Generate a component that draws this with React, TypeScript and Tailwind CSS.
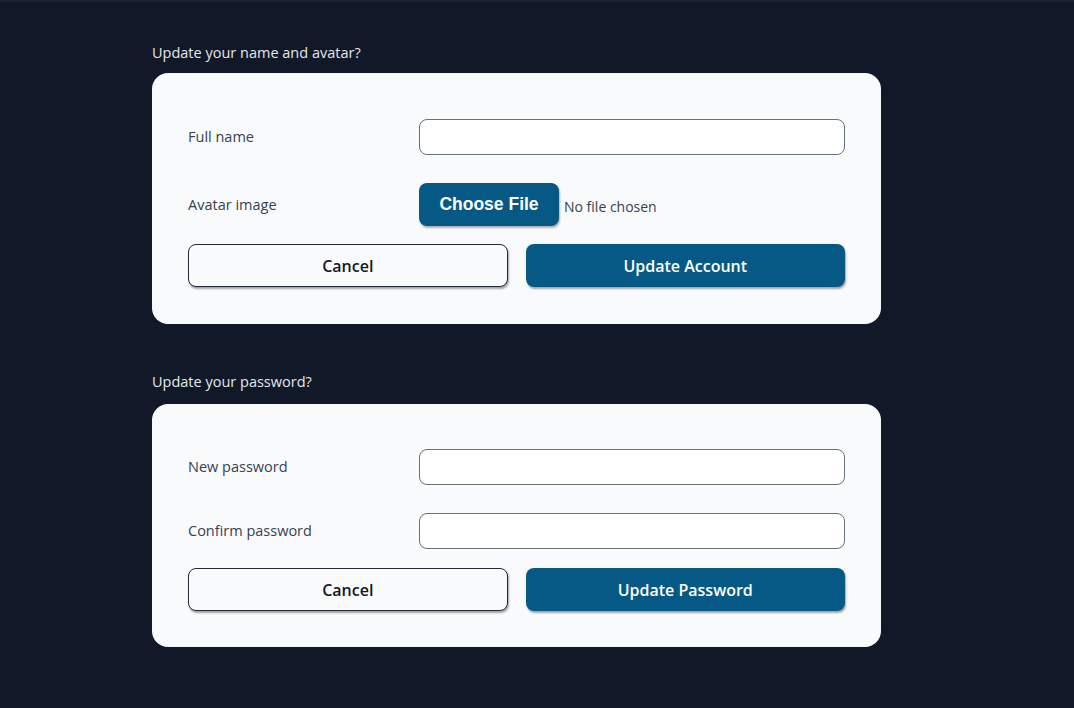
import React from "react";

const font = { fontFamily: '"Open Sans", "Noto Sans", sans-serif' };

function Row({ label, children }: { label: string; children: React.ReactNode }) {
  return (
    <div className="grid grid-cols-[231px_1fr] items-center">
      <label className="text-[14.5px] text-[#374151]">{label}</label>
      {children}
    </div>
  );
}

function Input({ type = "text" }: { type?: string }) {
  return (
    <input
      type={type}
      className="h-[36px] w-full rounded-lg border border-gray-500 bg-white px-3 outline-none"
    />
  );
}

function Buttons({ primary }: { primary: string }) {
  return (
    <div className="grid grid-cols-2 gap-[18px]">
      <button className="h-[43px] rounded-lg border border-[#1f2937] bg-[#f9fafb] text-[16px] font-semibold text-[#111827] shadow-[1px_2px_2px_rgba(0,0,0,0.35)]">
        Cancel
      </button>
      <button className="h-[43px] rounded-lg bg-[#075985] text-[16px] font-semibold text-white shadow-[1px_2px_2px_rgba(0,0,0,0.35)]">
        {primary}
      </button>
    </div>
  );
}

export default function App() {
  return (
    <div className="min-h-[708px] w-full border-t-2 border-[#1a2130] bg-[#111827]" style={font}>
      <div className="w-[729px] ml-[152px] pt-[41px]">
        <h2 className="text-[14.5px] leading-[20px] text-[#e5e7eb]">Update your name and avatar?</h2>
        <div className="mt-[10px] rounded-2xl bg-[#f9fafb] px-[36px] pt-[46px] pb-[37px]">
          <Row label="Full name">
            <Input />
          </Row>
          <div className="mt-[28px]">
            <Row label="Avatar image">
              <div className="flex items-center">
                <span
                  className="flex h-[43px] w-[140px] items-center justify-center rounded-lg bg-[#075985] text-[17.5px] font-bold text-white shadow-[1px_2px_2px_rgba(0,0,0,0.3)]"
                  style={{ fontFamily: '"Liberation Sans", Arial, sans-serif' }}
                >
                  Choose File
                </span>
                <span className="ml-[5px] mt-[4px] text-[14px] text-[#374151]">No file chosen</span>
              </div>
            </Row>
          </div>
          <div className="mt-[18px]">
            <Buttons primary="Update Account" />
          </div>
        </div>

        <h2 className="mt-[48px] text-[14.5px] leading-[20px] text-[#e5e7eb]">Update your password?</h2>
        <div className="mt-[12px] rounded-2xl bg-[#f9fafb] px-[36px] pt-[45px] pb-[36px]">
          <Row label="New password">
            <Input type="password" />
          </Row>
          <div className="mt-[28px]">
            <Row label="Confirm password">
              <Input type="password" />
            </Row>
          </div>
          <div className="mt-[19px]">
            <Buttons primary="Update Password" />
          </div>
        </div>
      </div>
    </div>
  );
}
